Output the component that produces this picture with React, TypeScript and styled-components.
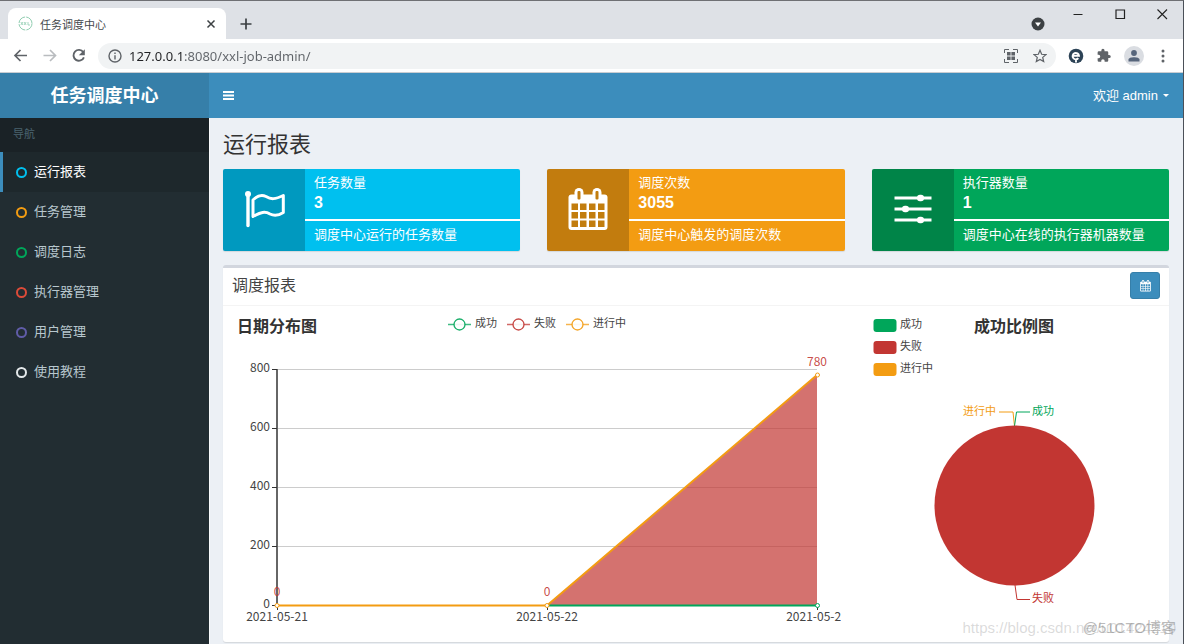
import React from "react";
import styled, { createGlobalStyle } from "styled-components";

const CJK = `"Liberation Sans", "Noto Sans CJK SC", sans-serif`;
const UI = `"Noto Sans", "Noto Sans CJK SC", sans-serif`;
const CHART = `"Noto Sans CJK SC", sans-serif`;

const Global = createGlobalStyle`
  * { box-sizing: border-box; }
  html, body, #root { height: 100%; }
  body { margin: 0; font: 13px/18px ${CJK}; color: #333; background: #ecf0f5; overflow: hidden; }
  button { border: 0; padding: 0; background: none; font: inherit; color: inherit; display: grid; place-items: center; }
  a { color: inherit; text-decoration: none; }
  h1, h2, p { margin: 0; padding: 0; font-weight: 400; }
  svg { display: block; }
`;

const Window = styled.div`
  position: relative;
  display: flex;
  flex-direction: column;
  min-height: 100%;
  border-top: 1px solid #6f7074;
  border-right: 1px solid #4b5058;
`;

/* browser frame */
const TabStrip = styled.div`
  display: flex;
  align-items: flex-end;
  height: 38px;
  padding-left: 8px;
  background: #dee1e6;
`;
const Tab = styled.div`
  display: flex;
  align-items: center;
  width: 218px;
  height: 31px;
  padding: 0 8px 0 10px;
  gap: 7px;
  border-radius: 8px 8px 0 0;
  background: #fff;
  color: #45494d;
  font: 11px/16px ${CHART};
`;
const TabTitle = styled.span`
  flex: 1;
`;
const NewTab = styled.button`
  width: 40px;
  height: 31px;
`;
const WindowButtons = styled.div`
  display: flex;
  align-self: stretch;
  align-items: flex-start;
  margin-left: auto;
`;
const WindowButton = styled.button`
  width: 42px;
  height: 26px;
`;
const TabSearch = styled.button`
  width: 38px;
  height: 38px;
  padding-top: 7px;
`;
const AddressRow = styled.div`
  display: flex;
  align-items: center;
  height: 34px;
  padding: 0 6px;
  border-bottom: 1px solid #c9cdd2;
  background: #fff;
`;
const ToolButton = styled.button`
  width: 29px;
  height: 29px;
`;
const Address = styled.div`
  display: flex;
  flex: 1;
  align-items: center;
  height: 26px;
  margin: 0 5px;
  padding: 0 2px;
  border-radius: 13px;
  background: #f1f3f4;
`;
const AddressInput = styled.input`
  flex: 1;
  min-width: 0;
  padding: 0;
  border: 0;
  outline: 0;
  font: 13px/18px ${UI};
  color: transparent;
  background: linear-gradient(90deg, #202124 54px, #5f6368 54px);
  background-clip: text;
`;

/* application */
const Header = styled.header`
  display: flex;
  height: 45px;
  background: #3c8dbc;
  color: #fff;
`;
const Brand = styled.a`
  width: 209px;
  padding-top: 2px;
  background: #367fa9;
  font: bold 18px/43px ${CJK};
  text-align: center;
`;
const MenuButton = styled.button`
  width: 39px;
`;
const UserButton = styled.button`
  display: flex;
  align-items: center;
  gap: 5px;
  margin-left: auto;
  padding-right: 14px;
`;
const Caret = styled.span`
  border: 3px solid transparent;
  border-top-color: #fff;
  border-bottom: 0;
`;
const Body = styled.div`
  display: flex;
  flex: 1;
`;
const Sidebar = styled.nav`
  width: 209px;
  background: #222d32;
`;
const NavHeading = styled.div`
  height: 34px;
  padding-left: 13px;
  background: #1a2226;
  color: #4b646f;
  font: 11px/32px ${CJK};
`;
const NavItem = styled.a<{ $active?: boolean }>`
  display: flex;
  align-items: center;
  gap: 7px;
  height: 40px;
  padding-left: 13px;
  border-left: 3px solid ${(p) => (p.$active ? "#3c8dbc" : "transparent")};
  background: ${(p) => (p.$active ? "#1e282c" : "none")};
  color: ${(p) => (p.$active ? "#fff" : "#b8c7ce")};
`;
const Ring = styled.span<{ $color: string }>`
  width: 11px;
  height: 11px;
  border: 2px solid ${(p) => p.$color};
  border-radius: 50%;
`;
const Content = styled.main`
  flex: 1;
  min-width: 0;
  padding: 14px 14px 0 13px;
  border-left: 1px solid #f8fafc;
`;
const PageTitle = styled.h1`
  height: 37px;
  font: 22px/26px ${CJK};
`;
const Cards = styled.div`
  display: grid;
  grid-template-columns: repeat(3, 1fr);
  gap: 27px;
  margin-bottom: 14px;
`;
const Card = styled.section<{ $color: string }>`
  display: flex;
  height: 82px;
  border-radius: 2px;
  overflow: hidden;
  background: ${(p) => p.$color};
  color: #fff;
  box-shadow: 0 1px 1px rgba(0, 0, 0, 0.1);
`;
const CardIcon = styled.div`
  display: grid;
  place-items: center;
  width: 82px;
  background: rgba(0, 0, 0, 0.2);
`;
const CardText = styled.div`
  flex: 1;
`;
const CardTop = styled.div`
  height: 52px;
  padding: 5px 9px 0;
  border-bottom: 2px solid #fff;
`;
const CardNumber = styled.strong`
  display: block;
  font-size: 16px;
  line-height: 22px;
`;
const CardNote = styled.p`
  padding: 5px 9px 0;
`;
const Panel = styled.section`
  border-top: 3px solid #d2d6de;
  border-radius: 3px;
  background: #fff;
  box-shadow: 0 1px 1px rgba(0, 0, 0, 0.1);
`;
const PanelHead = styled.div`
  display: flex;
  align-items: flex-start;
  justify-content: space-between;
  height: 38px;
  padding: 4px 9px 0;
  border-bottom: 1px solid #f4f4f4;
`;
const PanelTitle = styled.h2`
  color: #444;
  font: 16px/28px ${CJK};
`;
const DateButton = styled.button`
  width: 30px;
  height: 27px;
  border: 1px solid #367fa9;
  border-radius: 3px;
  background: #3c8dbc;
  color: #3c8dbc;
`;
const Charts = styled.div`
  display: grid;
  grid-template-columns: 609fr 292fr;
  gap: 27px;
  padding: 8px 9px 9px;
`;
const ChartSvg = styled.svg`
  width: 100%;
  height: auto;
  overflow: hidden;
  font: 11px ${CHART};
`;
const Watermark = styled.div`
  position: absolute;
  right: 7px;
  bottom: 7px;
  color: rgba(120, 120, 120, 0.5);
  font: 15px/18px ${CJK};
`;
const WatermarkUrl = styled(Watermark)`
  color: rgba(150, 150, 150, 0.35);
`;

const GREEN = "#00a65a";
const RED = "#c23632";
const ORANGE = "#f39c12";

const nav = [
  ["运行报表", "#00c0ef"],
  ["任务管理", "#f39c12"],
  ["调度日志", "#00a65a"],
  ["执行器管理", "#dd4b39"],
  ["用户管理", "#605ca8"],
  ["使用教程", "#e4e8ea"],
];

const FlagIcon = () => (
  <svg width="42" height="38" viewBox="0 0 42 38" fill="none" stroke="#fff">
    <circle cx="5" cy="3" r="3" fill="#fff" stroke="none" />
    <path d="M5 3v31.500" strokeWidth="3.400" strokeLinecap="round" />
    <path d="M10 9C14 5 19 3.500 23 5.500C28 8.500 32 8.500 40.300 4.500V21.500C35 25 31 25 27 23C22 20 18 21 10 25.500Z" strokeWidth="3" strokeLinejoin="round" />
  </svg>
);
/* the grid cells take the colour of the surface behind the icon */
const CalendarIcon = ({ width = 40, height = 44 }: { width?: number; height?: number }) => (
  <svg width={width} height={height} viewBox="0 0 40 44">
    <rect x="0.500" y="6.500" width="39" height="35.500" rx="3" fill="#fff" />
    <rect x="6.500" y="0" width="9" height="14" rx="4.500" fill="#fff" />
    <rect x="24.500" y="0" width="9" height="14" rx="4.500" fill="#fff" />
    <g fill="currentColor">
      <rect x="9.500" y="3" width="3" height="8.500" rx="1" />
      <rect x="27.500" y="3" width="3" height="8.500" rx="1" />
      {[15.5, 24, 32.5].map((y) => [3.5, 12, 21, 30].map((x) => <rect key={`${x}-${y}`} x={x} y={y} width="6.500" height="6.500" />))}
    </g>
  </svg>
);
const CardCalendar = styled.div`
  color: #c27d0e;
`;
const SlidersIcon = () => (
  <svg width="38" height="32" viewBox="0 0 38 32" stroke="#fff" strokeWidth="3" fill="#fff">
    <path d="M0.500 4h37M0.500 15h37M0.500 26h37" />
    <g stroke="none">
      <rect x="23" y="0.800" width="7" height="6.400" rx="3" />
      <rect x="8" y="11.800" width="7" height="6.400" rx="3" />
      <rect x="23" y="22.800" width="7" height="6.400" rx="3" />
    </g>
  </svg>
);

const cards = [
  { color: "#00c0ef", icon: <FlagIcon />, title: "任务数量", value: "3", note: "调度中心运行的任务数量" },
  { color: "#f39c12", icon: <CardCalendar><CalendarIcon /></CardCalendar>, title: "调度次数", value: "3055", note: "调度中心触发的调度次数" },
  { color: "#00a65a", icon: <SlidersIcon />, title: "执行器数量", value: "1", note: "调度中心在线的执行器机器数量" },
];

const ticks: [string, number][] = [["800", 55.5], ["600", 114.5], ["400", 173.5], ["200", 232.5], ["0", 291.5]];
const days: [string, number][] = [["2021-05-21", 45], ["2021-05-22", 315], ["2021-05-23", 585]];

const LineChart = () => (
  <ChartSvg viewBox="0 0 609 319" role="img" aria-label="日期分布图">
    <text x="5" y="18" fontSize="16" fontWeight="700" fill="#333">日期分布图</text>
    {([["成功", GREEN, 216], ["失败", RED, 275], ["进行中", ORANGE, 334]] as [string, string, number][]).map(([label, color, x]) => (
      <g key={label}>
        <path d={`M${x} 10.500h23`} stroke={color} strokeWidth="1.500" opacity="0.75" />
        <circle cx={x + 11.5} cy="10.500" r="5.500" fill="#fff" stroke={color} strokeWidth="1.300" opacity="0.9" />
        <text x={x + 27} y="13" fill="#444">{label}</text>
      </g>
    ))}
    {ticks.slice(0, 4).map(([t, y]) => <path key={t} d={`M45 ${y}h540`} stroke="#ccc" />)}
    <path d="M315 291L585 61V291Z" fill={RED} fillOpacity="0.7" />
    <path d="M45 55v236" stroke="#666" strokeWidth="2" />
    {ticks.map(([t, y]) => (
      <g key={t}>
        <path d={`M40 ${y}h5`} stroke="#333" />
        <text x="38" y={y + 2} textAnchor="end" fontSize="12" fill="#444">{t}</text>
      </g>
    ))}
    {days.map(([d, x]) => (
      <g key={d}>
        <path d={`M${x + 0.5} 291v5`} stroke="#333" />
        <text x={x} y="307" textAnchor="middle" fontSize="12" fill="#444">{d}</text>
      </g>
    ))}
    <path d="M315 291.500H585" stroke={GREEN} strokeWidth="2" />
    <path d="M45 291.500H315L585 61" stroke={ORANGE} strokeWidth="2" fill="none" />
    <g fill="#fff">
      <circle cx="585.500" cy="291.500" r="2" stroke={GREEN} />
      <circle cx="45" cy="291.500" r="2" stroke={ORANGE} />
      <circle cx="315" cy="291.500" r="2" stroke={ORANGE} />
      <circle cx="585.500" cy="61" r="2" stroke={ORANGE} />
    </g>
    <g fill={RED} fillOpacity="0.9" fontSize="12" textAnchor="middle">
      <text x="45" y="282">0</text>
      <text x="315" y="282">0</text>
      <text x="585" y="52">780</text>
    </g>
  </ChartSvg>
);

const PieChart = () => (
  <ChartSvg viewBox="0 0 292 319" role="img" aria-label="成功比例图">
    {([["成功", GREEN, 5], ["失败", RED, 27], ["进行中", ORANGE, 49]] as [string, string, number][]).map(([label, color, y]) => (
      <g key={label}>
        <rect x="5.500" y={y} width="23" height="13" rx="3" fill={color} />
        <text x="32" y={y + 9} fill="#444">{label}</text>
      </g>
    ))}
    <text x="146" y="18" fontSize="16" fontWeight="700" fill="#333" textAnchor="middle">成功比例图</text>
    <g fill="none">
      <path d="M146.500 112l-1.500-14H131" stroke={ORANGE} />
      <path d="M146.500 112l2-14H162" stroke={GREEN} />
      <path d="M147 271l2 14.500H162" stroke={RED} />
    </g>
    <circle cx="146.500" cy="191.500" r="80" fill={RED} />
    <text x="128" y="101" fill={ORANGE} textAnchor="end">进行中</text>
    <text x="164" y="101" fill={GREEN}>成功</text>
    <text x="164" y="288" fill={RED}>失败</text>
  </ChartSvg>
);

const Glyph = ({ d, color = "#5f6368", size = 16, width = 1.7 }: { d: string; color?: string; size?: number; width?: number }) => (
  <svg width={size} height={size} viewBox="0 0 16 16" fill="none" stroke={color} strokeWidth={width}>
    <path d={d} />
  </svg>
);

export default function App() {
  return (
    <Window>
      <Global />
      <TabStrip>
        <Tab>
          <svg width="15" height="15" viewBox="0 0 15 15" fill="none" stroke="#8fcdb0">
            <circle cx="7.500" cy="7.500" r="6.500" strokeDasharray="9 1.200" />
            <path d="M2.800 6l2.200 3M5 6L2.800 9M6 6l2.200 3M8.200 6L6 9M10 6v3h2" strokeWidth="0.800" />
          </svg>
          <TabTitle>任务调度中心</TabTitle>
          <button aria-label="关闭标签页"><Glyph d="M4 4l8 8M12 4l-8 8" color="#3c4043" size={14} /></button>
        </Tab>
        <NewTab aria-label="新标签页"><Glyph d="M8 2.500v11M2.500 8h11" color="#3c4043" /></NewTab>
        <WindowButtons>
          <TabSearch aria-label="搜索标签页">
            <svg width="14" height="14" viewBox="0 0 14 14"><circle cx="7" cy="7" r="6.500" fill="#3c4043" /><path d="M4 5.500h6L7 9.500z" fill="#fff" /></svg>
          </TabSearch>
          <WindowButton aria-label="最小化"><Glyph d="M3.500 8.500h9" color="#222" width={1} /></WindowButton>
          <WindowButton aria-label="最大化"><Glyph d="M4 4h8.500v8.500h-8.500z" color="#222" width={1.2} /></WindowButton>
          <WindowButton aria-label="关闭"><Glyph d="M3.500 3.500l9.500 9.500M13 3.500L3.500 13" color="#222" width={1.1} /></WindowButton>
        </WindowButtons>
      </TabStrip>
      <AddressRow>
        <ToolButton aria-label="后退"><Glyph d="M14 7.500H2M7.500 2L2 7.500l5.500 5.500" /></ToolButton>
        <ToolButton aria-label="前进"><Glyph d="M1.500 7.500h12M8 2l5.500 5.500L8 13" color="#b9bcbf" /></ToolButton>
        <ToolButton aria-label="刷新">
          <svg width="16" height="16" viewBox="0 0 16 16" fill="none" stroke="#5f6368" strokeWidth="1.900"><path d="M12.300 4.200A5.400 5.400 0 1 0 12.900 9.300" /><path d="M13.800 1.200v6h-6z" fill="#5f6368" stroke="none" /></svg>
        </ToolButton>
        <Address>
          <ToolButton aria-label="网站信息">
            <svg width="14" height="14" viewBox="0 0 14 14" fill="none" stroke="#5f6368" strokeWidth="1.400"><circle cx="7" cy="7" r="6" /><path d="M7 6.200V10.500M7 3.500v1.500" /></svg>
          </ToolButton>
          <AddressInput aria-label="地址栏" defaultValue="127.0.0.1:8080/xxl-job-admin/" />
          <ToolButton aria-label="二维码">
            <svg width="14" height="14" viewBox="0 0 14 14" fill="none" stroke="#5f6368"><path d="M.500 4V.500H5M9 .500h4.500V4M13.500 10v3.500H9M5 13.500H.500V10" /><path d="M3 3h3.600v3.600H3zM7.400 3H11v3.600H7.400zM3 7.400h3.600V11H3zM7.400 7.400H11V11H7.400z" fill="#5f6368" stroke="none" /></svg>
          </ToolButton>
          <ToolButton aria-label="收藏"><Glyph size={14} width={1.4} d="M8 1.500l1.900 4.500 4.900.400-3.700 3.200 1.100 4.800L8 11.900l-4.200 2.500 1.100-4.800L1.200 6.400l4.900-.400z" /></ToolButton>
        </Address>
        <ToolButton aria-label="扩展程序 e">
          <svg width="16" height="16" viewBox="0 0 16 16" fill="none"><circle cx="8" cy="8" r="7.300" fill="#2c4356" /><path d="M4.800 7.800H11A3.200 3.200 0 1 0 10.300 10.200M8 11v3.500" stroke="#fff" strokeWidth="1.900" /></svg>
        </ToolButton>
        <ToolButton aria-label="扩展程序">
          <svg width="15" height="15" viewBox="1 0 24 24" fill="#5f6368"><path d="M20.500 11H19V7a2 2 0 0 0-2-2h-4V3.500a2.500 2.500 0 0 0-5 0V5H4a2 2 0 0 0-2 2v3.800h1.500a2.700 2.700 0 0 1 0 5.400H2V20a2 2 0 0 0 2 2h3.800v-1.500a2.700 2.700 0 0 1 5.400 0V22H17a2 2 0 0 0 2-2v-4h1.500a2.500 2.500 0 0 0 0-5z" /></svg>
        </ToolButton>
        <ToolButton aria-label="用户">
          <svg width="20" height="20" viewBox="0 0 20 20"><circle cx="10" cy="10" r="10" fill="#dadde2" /><circle cx="10" cy="7" r="2.900" fill="#56657b" /><path d="M4.500 15.500v-2c0-3 11-3 11 0v2z" fill="#56657b" /></svg>
        </ToolButton>
        <ToolButton aria-label="更多">
          <svg width="4" height="14" viewBox="0 0 4 14" fill="#5f6368"><circle cx="2" cy="2" r="1.500" /><circle cx="2" cy="7" r="1.500" /><circle cx="2" cy="12" r="1.500" /></svg>
        </ToolButton>
      </AddressRow>
      <Header>
        <Brand href="#">任务调度中心</Brand>
        <MenuButton aria-label="切换导航"><svg width="11" height="9" viewBox="0 0 11 9" fill="#fff"><path d="M0 0h11v2H0zM0 3.500h11v2H0zM0 7h11v2H0z" /></svg></MenuButton>
        <UserButton>欢迎 admin<Caret /></UserButton>
      </Header>
      <Body>
        <Sidebar>
          <NavHeading>导航</NavHeading>
          {nav.map(([label, color], i) => (
            <NavItem key={label} href="#" $active={i === 0}><Ring $color={color} />{label}</NavItem>
          ))}
        </Sidebar>
        <Content>
          <PageTitle>运行报表</PageTitle>
          <Cards>
            {cards.map((c) => (
              <Card key={c.title} $color={c.color}>
                <CardIcon>{c.icon}</CardIcon>
                <CardText>
                  <CardTop>{c.title}<CardNumber>{c.value}</CardNumber></CardTop>
                  <CardNote>{c.note}</CardNote>
                </CardText>
              </Card>
            ))}
          </Cards>
          <Panel>
            <PanelHead>
              <PanelTitle>调度报表</PanelTitle>
              <DateButton aria-label="选择日期"><CalendarIcon width={11} height={12} /></DateButton>
            </PanelHead>
            <Charts><LineChart /><PieChart /></Charts>
          </Panel>
        </Content>
      </Body>
      <WatermarkUrl>https://blog.csdn.net/u01424210</WatermarkUrl>
      <Watermark>@51CTO博客</Watermark>
    </Window>
  );
}
